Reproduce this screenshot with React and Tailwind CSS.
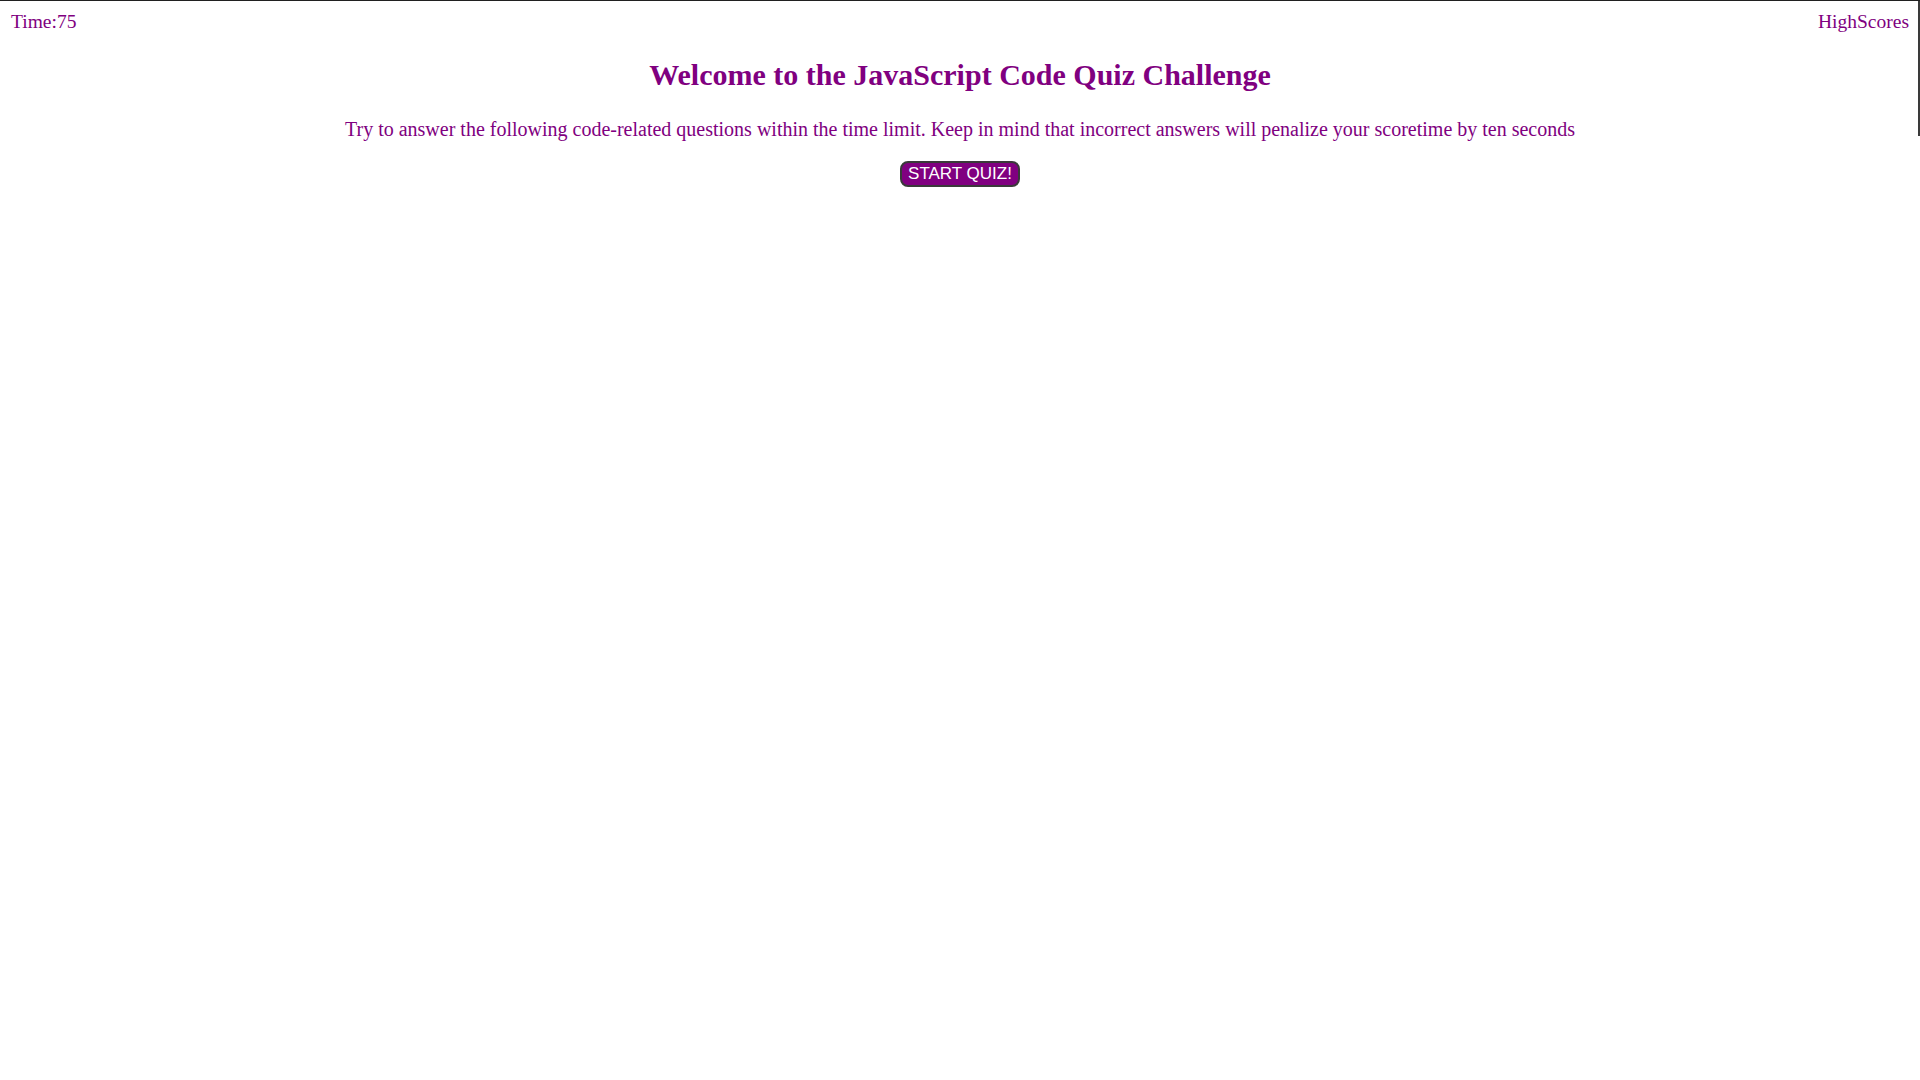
export default function App() {
  return (
    <div className="relative min-h-screen w-full bg-white border-t border-[#202020] text-[#800080]" style={{ fontFamily: '"Liberation Serif", "Times New Roman", serif' }}>
      <div className="absolute right-0 top-0 w-[2px] h-[135px] bg-[#3a3a3a]" />
      <header className="flex justify-between px-[11px] pt-[9px] text-[19.5px] leading-[24px]">
        <span>Time:75</span>
        <span>HighScores</span>
      </header>
      <main className="flex flex-col items-center">
        <h1 className="mt-[21px] text-[30px] font-bold leading-[40px]">Welcome to the JavaScript Code Quiz Challenge</h1>
        <p className="mt-[22px] text-[20px] leading-[24px]">Try to answer the following code-related questions within the time limit. Keep in mind that incorrect answers will penalize your scoretime by ten seconds</p>
        <button className="mt-[20px] h-[26px] px-[6px] rounded-[8px] border-2 border-[#3a3a3a] bg-[#800080] text-white text-[17px] leading-[20px]" style={{ fontFamily: '"Liberation Sans", Arial, sans-serif' }}>START QUIZ!</button>
      </main>
    </div>
  );
}
